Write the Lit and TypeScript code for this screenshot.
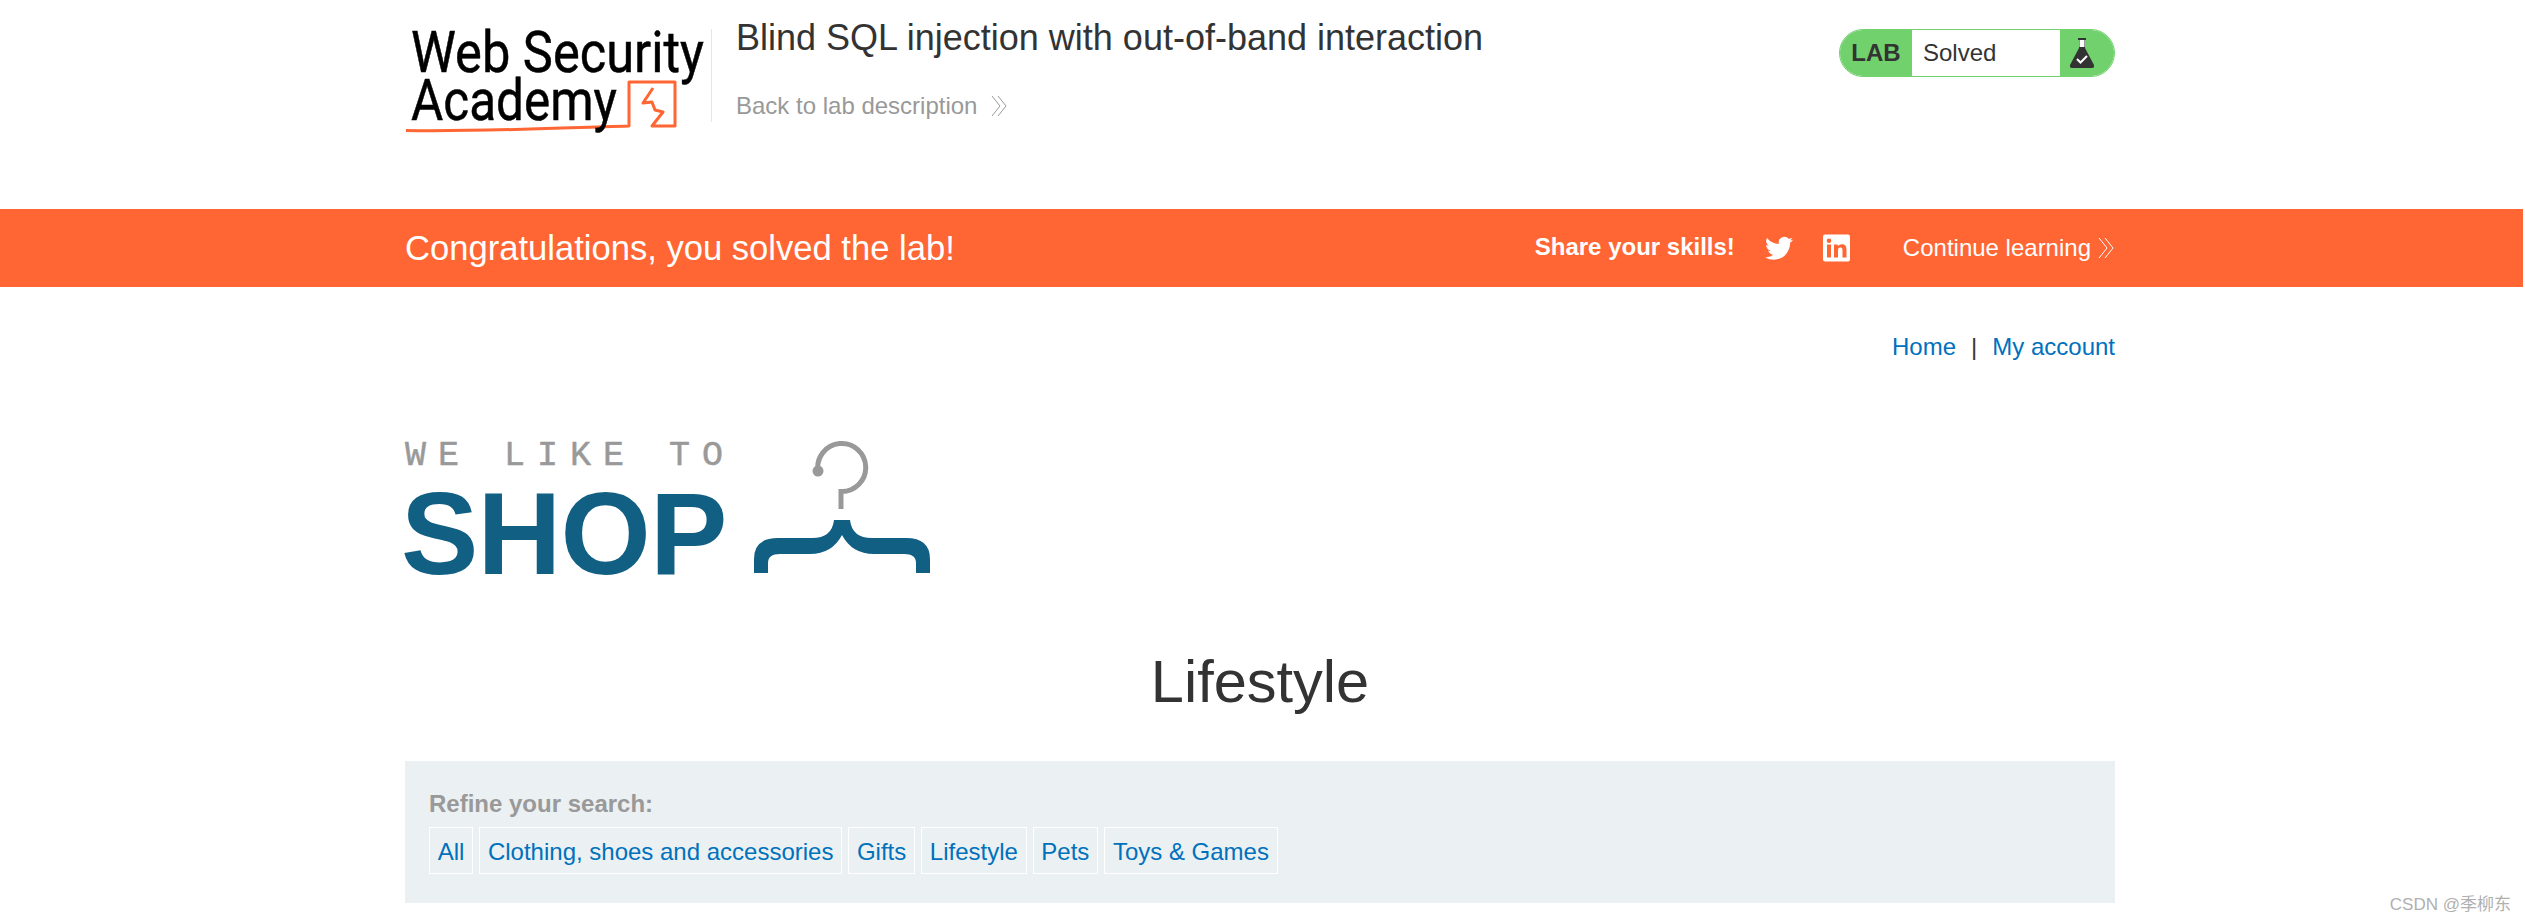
import { LitElement, html, css, svg } from "lit";
import { customElement } from "lit/decorators.js";

const chevrons = (w: number, h: number, c: string) => html`<svg width=${w} height=${h} viewBox="0 0 18 22" fill="none" stroke=${c} stroke-width="1"><path d="M2 1l8 10-8 10M8 1l8 10-8 10"/></svg>`;

@customElement("app-root")
export class AppRoot extends LitElement {
  static styles = css`
    :host { display: block; font-family: "Liberation Sans", Arial, sans-serif; color: #333; height: 919px; overflow: hidden; position: relative; background: #fff; }
    a { color: #0071bc; text-decoration: none; }
    .wrap { width: 1710px; margin-left: 405px; }
    .head { height: 209px; display: flex; align-items: flex-start; box-sizing: border-box; padding-top: 29px; }
    .logo { flex: 0 0 306px; height: 104px; }
    .logo svg { display: block; overflow: visible; }
    .logo-t { font-family: Roboto, sans-serif; font-size: 58px; fill: #000; font-weight: 400; stroke: #000; stroke-width: .5px; }
    .div { width: 1px; height: 93px; background: #e6e6e6; margin-right: 24px; }
    .title { flex: 1; }
    .title h2 { margin: 0; font-size: 36px; font-weight: 400; line-height: 40px; color: #333; margin-top: -11px; }
    .back { display: flex; align-items: center; gap: 13px; margin-top: 33px; font-size: 24px; line-height: 30px; color: #999; }
    .badge { width: 276px; height: 48px; box-sizing: border-box; display: flex; border: 1px solid #70d16d; border-radius: 24px; overflow: hidden; align-items: stretch; }
    .lab { width: 72px; background: #70d16d; font-weight: 700; font-size: 24px; display: flex; align-items: center; justify-content: center; box-sizing: border-box; }
    .st { flex: 1; background: #fff; display: flex; align-items: center; padding-left: 11px; font-size: 24px; }
    .fl { width: 54px; box-sizing: border-box; padding-right: 10px; background: #70d16d; display: flex; align-items: center; justify-content: center; }
    .banner { background: #f63; height: 78px; color: #fff; margin-right: 2px; }
    .banner .wrap { display: flex; align-items: center; height: 78px; }
    .congrats { flex: 1; font-size: 34.6px; }
    .share { font-weight: 700; font-size: 24px; margin-top: -3px; }
    .ic { display: block; margin-left: 30px; }
    .cont { display: flex; align-items: center; gap: 6px; margin-left: 53px; font-size: 24px; }
    .nav { display: flex; justify-content: flex-end; gap: 15px; font-size: 24px; line-height: 30px; padding-top: 45px; color: #333; }
    .shop { display: flex; align-items: flex-start; margin-top: 75px; }
    .shop-text { flex: 0 0 349px; }
    .we { font-family: "Liberation Mono", monospace; font-size: 35px; letter-spacing: 12px; color: #999; line-height: 34px; white-space: pre; -webkit-text-stroke: .5px #999; margin-top: 2px; }
    .sh { font-weight: 700; font-size: 116px; color: #115f83; line-height: 96px; margin-top: 13px; letter-spacing: -.8px; margin-left: -4px; }
    .hanger { display: block; margin-top: 4px; }
    h1 { text-align: center; font-size: 59.500px; font-weight: 400; line-height: 66px; margin: 67px 0 0; color: #333; }
    .panel { margin-top: 46px; height: 142px; background: #ebf0f2; box-sizing: border-box; padding: 28px 24px 0; }
    .ref { font-weight: 700; font-size: 24px; color: #999; line-height: 30px; }
    .tags { display: flex; gap: 6px; margin-top: 8px; font-size: 24px; }
    .tags a { border: 1px solid #fff; height: 47px; box-sizing: border-box; padding: 0 7.750px; line-height: 47px; }
    .wm { position: absolute; right: 14px; bottom: 4px; font: 17px "Liberation Sans", "Noto Sans CJK SC", sans-serif; color: #b0b0b0; }
  `;

  render() {
    const tags = ["All", "Clothing, shoes and accessories", "Gifts", "Lifestyle", "Pets", "Toys & Games"];
    return html`
      <div class="wrap head">
        <div class="logo">
          <svg width="306" height="104" viewBox="0 0 306 104">
            ${svg`<path d="M1 101.500C70 103 150 99 224 97V53h46v44h-23l11-14-8-2-3-8-9 1 10-15" fill="none" stroke="#f63" stroke-width="3" stroke-linejoin="round"/>
            <text class="logo-t" x="6" y="43" textLength="293" lengthAdjust="spacingAndGlyphs">Web Security</text>
            <text class="logo-t" x="6" y="91" textLength="206" lengthAdjust="spacingAndGlyphs">Academy</text>`}
          </svg>
        </div>
        <div class="div"></div>
        <div class="title">
          <h2>Blind SQL injection with out-of-band interaction</h2>
          <div class="back">Back to lab description ${chevrons(18, 22, "#999")}</div>
        </div>
        <div class="badge">
          <div class="lab">LAB</div>
          <div class="st">Solved</div>
          <div class="fl">
            <svg width="24" height="30" viewBox="0 0 24 30"><path d="M8 0h8v2h-1v8l9 17q.5 3-2 3H2q-2.500 0-2-3l9-17V2H8z" fill="#333"/><path d="M9.500 2h5v7h-5z" fill="#fff"/><path d="M7 21l3.500 3.500L17 18" fill="none" stroke="#fff" stroke-width="2"/></svg>
          </div>
        </div>
      </div>
      <div class="banner"><div class="wrap">
        <div class="congrats">Congratulations, you solved the lab!</div>
        <div class="share">Share your skills!</div>
        <svg class="ic" width="28" height="25" viewBox="0 0 24 20"><path fill="#fff" d="M24 2.400c-.9.4-1.800.7-2.800.8 1-.6 1.800-1.600 2.200-2.700-1 .6-2 1-3.100 1.200A4.900 4.900 0 0 0 11.900 6.200 14 14 0 0 1 1.700 1a4.900 4.900 0 0 0 1.500 6.600c-.8 0-1.600-.2-2.200-.6 0 2.400 1.700 4.400 3.900 4.900-.7.200-1.500.2-2.200.1.600 2 2.400 3.400 4.600 3.400A9.900 9.900 0 0 1 0 17.400 14 14 0 0 0 7.500 19.600c9.100 0 14.300-7.700 14-14.600.9-.7 1.800-1.600 2.500-2.600z"/></svg>
        <svg class="ic" width="27" height="28" viewBox="0 0 27 27"><rect width="27" height="27" rx="2" fill="#fff"/><path fill="#f63" d="M4 10h4v13H4zM6 4a2.300 2.300 0 1 1 0 4.600A2.300 2.300 0 0 1 6 4zM11 10h3.800v1.800c.6-1.100 2-2.100 4-2.100 4 0 4.700 2.600 4.700 6V23h-4v-6.500c0-1.600 0-3.400-2.100-3.400s-2.400 1.600-2.400 3.300V23h-4z"/></svg>
        <div class="cont">Continue learning ${chevrons(18, 22, "#fff")}</div>
      </div></div>
      <div class="wrap">
        <div class="nav"><a>Home</a><span>|</span><a>My account</a></div>
        <div class="shop">
          <div class="shop-text"><div class="we">WE LIKE TO</div><div class="sh">SHOP</div></div>
          <svg class="hanger" width="176" height="132" viewBox="0 0 176 132">
            ${svg`<path d="M64 30A24 24 0 1 1 87 50.500V68" fill="none" stroke="#999" stroke-width="5"/>
            <circle cx="64" cy="30" r="5.500" fill="#999"/>
            <path d="M0 132V118Q0 97 24 97H58Q78 97 80 79H96Q98 97 118 97H152Q176 97 176 118V132H162V122Q162 113 150 113H120Q98 113 88 94Q78 113 56 113H26Q14 113 14 122V132Z" fill="#115f83"/>`}
          </svg>
        </div>
        <h1>Lifestyle</h1>
        <div class="panel">
          <div class="ref">Refine your search:</div>
          <div class="tags">${tags.map((t) => html`<a>${t}</a>`)}</div>
        </div>
      </div>
      <div class="wm">CSDN @季柳东</div>
    `;
  }
}
